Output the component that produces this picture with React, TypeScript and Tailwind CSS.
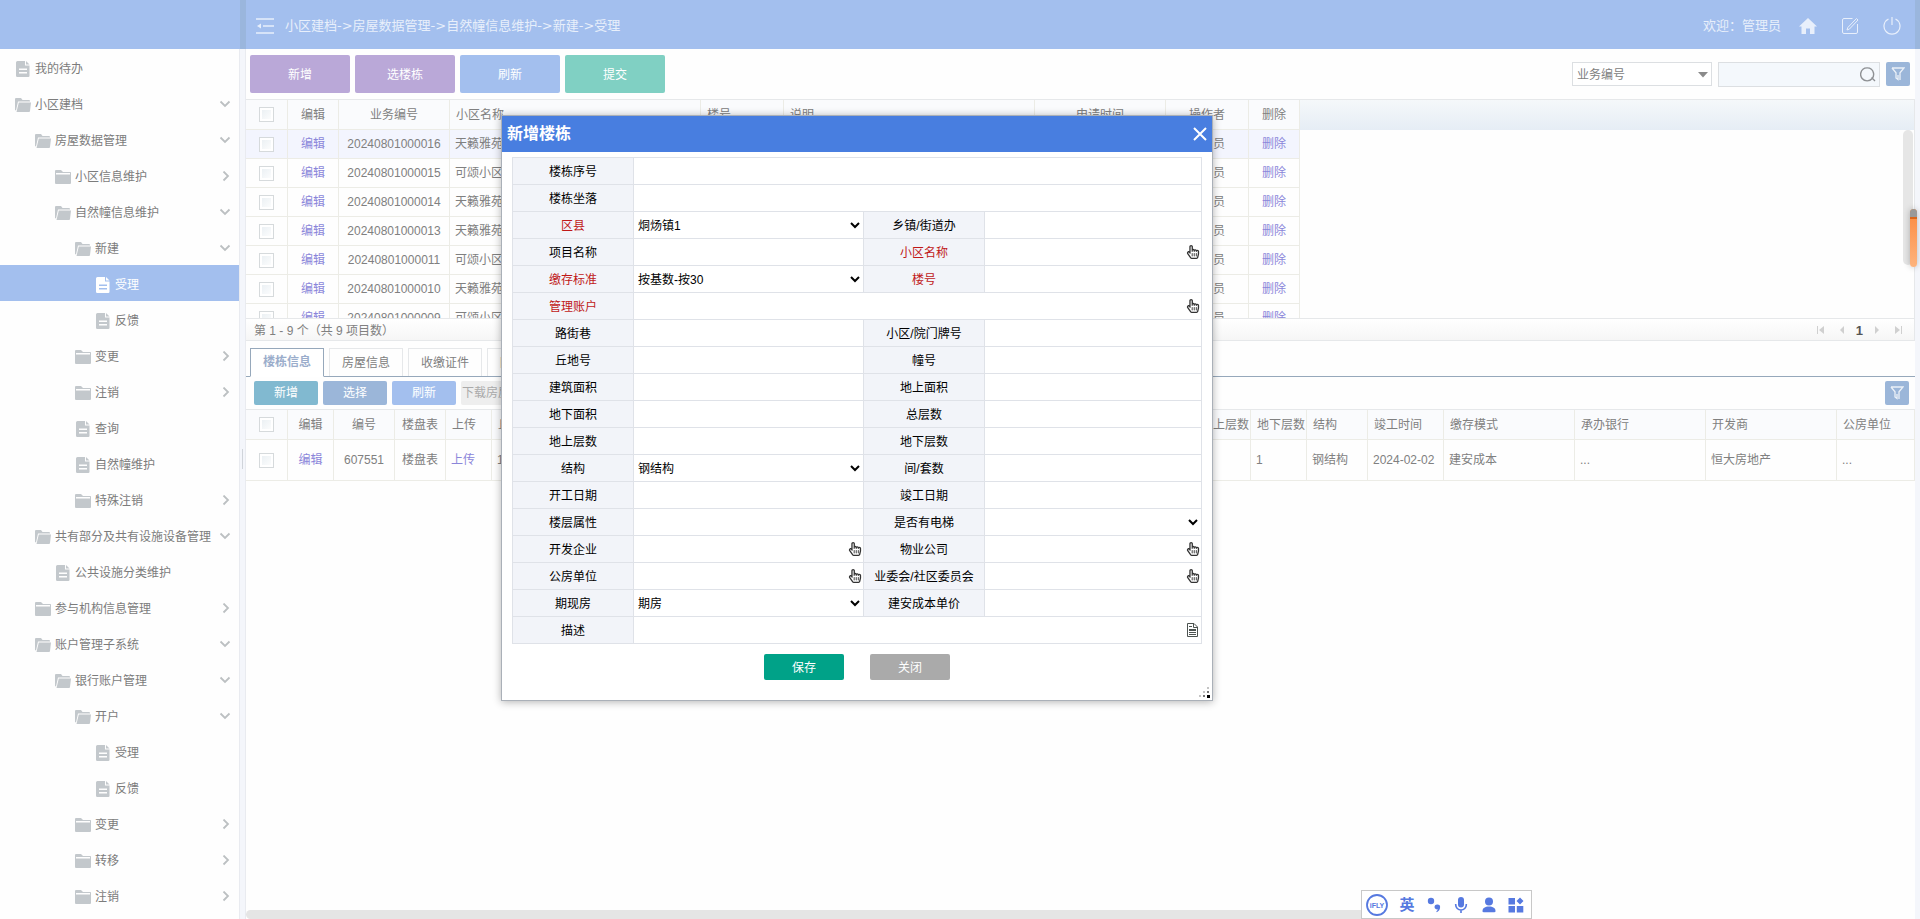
import { Fragment, useState } from 'react';
import type { ReactNode } from 'react';
import clsx from 'clsx';
import { FaRegHandPointer } from 'react-icons/fa';

type IconKind = 'doc' | 'folder' | 'open';

interface MenuItem {
  label: string;
  level: number;
  icon: IconKind;
  active?: boolean;
}

interface FormField {
  name: string;
  label: string;
  required?: boolean;
  kind?: 'text' | 'select' | 'pick' | 'note';
  value?: string;
}

interface Column {
  title: string;
  width?: string;
  center?: boolean;
}

const menu: MenuItem[] = [
  { label: '我的待办', level: 0, icon: 'doc' },
  { label: '小区建档', level: 0, icon: 'open' },
  { label: '房屋数据管理', level: 1, icon: 'open' },
  { label: '小区信息维护', level: 2, icon: 'folder' },
  { label: '自然幢信息维护', level: 2, icon: 'open' },
  { label: '新建', level: 3, icon: 'open' },
  { label: '受理', level: 4, icon: 'doc', active: true },
  { label: '反馈', level: 4, icon: 'doc' },
  { label: '变更', level: 3, icon: 'folder' },
  { label: '注销', level: 3, icon: 'folder' },
  { label: '查询', level: 3, icon: 'doc' },
  { label: '自然幢维护', level: 3, icon: 'doc' },
  { label: '特殊注销', level: 3, icon: 'folder' },
  { label: '共有部分及共有设施设备管理', level: 1, icon: 'open' },
  { label: '公共设施分类维护', level: 2, icon: 'doc' },
  { label: '参与机构信息管理', level: 1, icon: 'folder' },
  { label: '账户管理子系统', level: 1, icon: 'open' },
  { label: '银行账户管理', level: 2, icon: 'open' },
  { label: '开户', level: 3, icon: 'open' },
  { label: '受理', level: 4, icon: 'doc' },
  { label: '反馈', level: 4, icon: 'doc' },
  { label: '变更', level: 3, icon: 'folder' },
  { label: '转移', level: 3, icon: 'folder' },
  { label: '注销', level: 3, icon: 'folder' },
];

const indents = ['pl-[15px]', 'pl-[35px]', 'pl-[55px]', 'pl-[75px]', 'pl-[95px]'];

const taskColumns: Column[] = [
  { title: '业务编号', width: 'w-[111px]', center: true },
  { title: '小区名称', width: 'w-[251px]' },
  { title: '楼号', width: 'w-[83px]' },
  { title: '说明', width: 'w-[251px]' },
  { title: '申请时间', width: 'w-[131px]', center: true },
  { title: '操作者', width: 'w-[83px]', center: true },
];

const tasks = [
  ['20240801000016', '天籁雅苑'],
  ['20240801000015', '可颂小区'],
  ['20240801000014', '天籁雅苑'],
  ['20240801000013', '天籁雅苑'],
  ['20240801000011', '可颂小区'],
  ['20240801000010', '天籁雅苑'],
  ['20240801000009', '可颂小区'],
];

const buildingColumns: Column[] = [
  { title: '编号', width: 'w-[61px]', center: true },
  { title: '楼盘表', width: 'w-[51px]', center: true },
  { title: '上传', width: 'w-[46px]' },
  { title: '丘地号', width: 'w-[90px]' },
  { title: '幢号', width: 'w-[70px]' },
  { title: '建筑面积', width: 'w-[100px]' },
  { title: '地上面积', width: 'w-[100px]' },
  { title: '地下面积', width: 'w-[100px]' },
  { title: '总层数', width: 'w-[70px]' },
  { title: '楼栋坐落', width: 'w-[173px]' },
  { title: '地上层数', width: 'w-[56px]' },
  { title: '地下层数', width: 'w-[56px]' },
  { title: '结构', width: 'w-[61px]' },
  { title: '竣工时间', width: 'w-[76px]' },
  { title: '缴存模式', width: 'w-[131px]' },
  { title: '承办银行', width: 'w-[131px]' },
  { title: '开发商', width: 'w-[131px]' },
  { title: '公房单位' },
];

const building = [
  '607551', '楼盘表', '上传', '1', '', '', '', '', '', '', '',
  '1', '钢结构', '2024-02-02', '建安成本', '...', '恒大房地产', '...',
];

// A row with a single field spans the whole form
const formRows: FormField[][] = [
  [{ name: 'seq', label: '楼栋序号' }],
  [{ name: 'address', label: '楼栋坐落' }],
  [
    { name: 'district', label: '区县', required: true, kind: 'select', value: '烔炀镇1' },
    { name: 'street', label: '乡镇/街道办' },
  ],
  [
    { name: 'project', label: '项目名称' },
    { name: 'community', label: '小区名称', required: true, kind: 'pick' },
  ],
  [
    { name: 'standard', label: '缴存标准', required: true, kind: 'select', value: '按基数-按30' },
    { name: 'buildingNo', label: '楼号', required: true },
  ],
  [{ name: 'account', label: '管理账户', required: true, kind: 'pick' }],
  [{ name: 'road', label: '路街巷' }, { name: 'gate', label: '小区/院门牌号' }],
  [{ name: 'plot', label: '丘地号' }, { name: 'block', label: '幢号' }],
  [{ name: 'area', label: '建筑面积' }, { name: 'areaAbove', label: '地上面积' }],
  [{ name: 'areaBelow', label: '地下面积' }, { name: 'floors', label: '总层数' }],
  [{ name: 'floorsAbove', label: '地上层数' }, { name: 'floorsBelow', label: '地下层数' }],
  [
    { name: 'structure', label: '结构', kind: 'select', value: '钢结构' },
    { name: 'units', label: '间/套数' },
  ],
  [{ name: 'startDate', label: '开工日期' }, { name: 'endDate', label: '竣工日期' }],
  [
    { name: 'floorAttr', label: '楼层属性' },
    { name: 'elevator', label: '是否有电梯', kind: 'select', value: '' },
  ],
  [
    { name: 'developer', label: '开发企业', kind: 'pick' },
    { name: 'property', label: '物业公司', kind: 'pick' },
  ],
  [
    { name: 'publicUnit', label: '公房单位', kind: 'pick' },
    { name: 'committee', label: '业委会/社区委员会', kind: 'pick' },
  ],
  [
    { name: 'stage', label: '期现房', kind: 'select', value: '期房' },
    { name: 'unitPrice', label: '建安成本单价' },
  ],
  [{ name: 'remark', label: '描述', kind: 'note' }],
];

function TreeIcon({ kind }: { kind: IconKind }) {
  if (kind === 'doc') {
    return (
      <svg viewBox="0 0 16 16" className="size-4 shrink-0" fill="currentColor" aria-hidden="true">
        <path
          fillRule="evenodd"
          d="M2.500 0H10v4.500h4.500v10.300a1.200 1.200 0 0 1-1.200 1.200H2.200A1.200 1.200 0 0 1 1 14.800V1.500A1.500 1.500 0 0 1 2.500 0ZM4 7.500V9h8V7.500H4Zm0 3.500v1.500h8V11H4Z"
        />
        <path d="M11 0l3.500 3.500H11z" />
      </svg>
    );
  }
  if (kind === 'folder') {
    return (
      <svg viewBox="0 0 16 16" className="size-4 shrink-0" fill="currentColor" aria-hidden="true">
        <path d="M0 4V2a1 1 0 0 1 1-1h5l2 2h7a1 1 0 0 1 1 1v0z" />
        <path d="M0 5.500h16V14a1 1 0 0 1-1 1H1a1 1 0 0 1-1-1z" />
        <path d="M0 3.500h1V6H0zM15 3.500h1V6h-1z" />
      </svg>
    );
  }
  return (
    <svg viewBox="0 0 16 16" className="size-4 shrink-0" fill="currentColor" aria-hidden="true">
      <path d="M0 13V2a1 1 0 0 1 1-1h5l1.500 2H14a1 1 0 0 1 1 1v.5H3L1 13.500z" />
      <path d="M3.800 5.500H16L15 14a1 1 0 0 1-1 1H1.500z" />
    </svg>
  );
}

function FilterIcon() {
  return (
    <svg viewBox="0 0 14 14" className="size-3.5" fill="none" stroke="currentColor" aria-hidden="true">
      <path d="M1 1h12L9 5.800V13M1 1l4 4.800V11l2 1.500V8" strokeWidth="1.300" />
    </svg>
  );
}

function FilterButton() {
  return (
    <button
      type="button"
      aria-label="筛选"
      className="flex size-6 items-center justify-center rounded-xs bg-[#9bb6d9] text-white/80"
    >
      <FilterIcon />
    </button>
  );
}

function CheckBox({ label }: { label: string }) {
  return (
    <input
      type="checkbox"
      aria-label={label}
      className="mx-auto block size-[15px] appearance-none border border-[#d6dadc] bg-linear-to-br from-[#e8eef2] to-white shadow-[inset_0_0_0_2px_#fff]"
    />
  );
}

function Sidebar() {
  return (
    <aside className="flex w-60 shrink-0 flex-col">
      <div className="h-[49px] shrink-0 bg-[#a3bfee]" />
      <nav className="flex-1 border-r border-[#e9ebf0]">
        {menu.map((item, i) => (
          <a
            key={i}
            href="#"
            className={clsx(
              'flex h-9 items-center gap-1 pt-1 pr-2',
              indents[item.level],
              item.active ? 'bg-[#a3bfee] text-white' : 'text-[#7c7c7c]',
            )}
          >
            <span className={item.active ? 'text-white' : 'text-[#c3c8cc]'}>
              <TreeIcon kind={item.icon} />
            </span>
            <span className="flex-1 whitespace-nowrap">{item.label}</span>
            {item.icon !== 'doc' && (
              <svg viewBox="0 0 12 12" className="size-3 shrink-0 text-[#bcc0c2]" fill="none" stroke="currentColor" strokeWidth="1.800" aria-hidden="true">
                <path d={item.icon === 'open' ? 'M1.500 2.500L6 7l4.500-4.500' : 'M4.500 .5L9 5 4.500 9.500'} />
              </svg>
            )}
          </a>
        ))}
      </nav>
    </aside>
  );
}

function Header() {
  return (
    <header className="flex h-[49px] shrink-0 items-center bg-[#a3bfee] pt-0.5 pr-3.5 pl-[10px] text-[13px] text-[#e8effb]">
      <button type="button" aria-label="收起菜单" className="mr-[11px]">
        <svg viewBox="0 0 18 16" className="h-4 w-[18px]" fill="none" stroke="currentColor" strokeWidth="1.500" aria-hidden="true">
          <path d="M0 1h18M7 8h11M0 15h18" />
          <path d="M1 8l4-2.500v5z" fill="currentColor" stroke="none" />
        </svg>
      </button>
      <span className="flex-1 font-['DejaVu_Sans','Noto_Sans_CJK_SC',sans-serif]">
        小区建档-&gt;房屋数据管理-&gt;自然幢信息维护-&gt;新建-&gt;受理
      </span>
      <span className="mr-[18px]">欢迎：管理员</span>
      <div className="flex items-center gap-6">
        <button type="button" aria-label="首页">
          <svg viewBox="0 0 18 16" className="h-4 w-[18px]" fill="currentColor" aria-hidden="true">
            <path d="M9 0l9 8.500h-2.500V16H11v-5.500H7V16H2.500V8.500H0z" />
          </svg>
        </button>
        <button type="button" aria-label="编辑">
          <svg viewBox="0 0 18 18" className="size-[18px]" fill="none" stroke="currentColor" aria-hidden="true">
            <path d="M11.500 1.500H3A1.500 1.500 0 0 0 1.500 3v12A1.500 1.500 0 0 0 3 16.500h12a1.500 1.500 0 0 0 1.500-1.500V7" />
            <path d="M15.500 1.500l1.500 1.500-8.500 9-2.500 1 .8-2.500z" />
          </svg>
        </button>
        <button type="button" aria-label="退出">
          <svg viewBox="0 0 18 18" className="size-[18px]" fill="none" stroke="currentColor" strokeWidth="1.200" aria-hidden="true">
            <path d="M5.500 2A8 8 0 1 0 12.500 2M9 0v8" />
          </svg>
        </button>
      </div>
    </header>
  );
}

const headCell = 'border-r border-b border-[#ecece6] bg-[#fafbfd] font-normal';
const bodyCell = 'border-r border-b border-[#ecece6]';

function TaskGrid() {
  return (
    <div className="relative h-[219px] shrink-0 overflow-hidden border-t border-r border-[#e6e8ea]">
      <table className="w-full table-fixed border-separate border-spacing-0 whitespace-nowrap">
        <thead>
          <tr className="h-[30px]">
            <th className={clsx(headCell, 'w-[42px]')}><CheckBox label="全选" /></th>
            <th className={clsx(headCell, 'w-[51px]')}>编辑</th>
            {taskColumns.map((col) => (
              <th key={col.title} className={clsx(headCell, col.width, col.center ? 'text-center' : 'pl-1.5 text-left')}>
                {col.title}
              </th>
            ))}
            <th className={clsx(headCell, 'w-[51px]')}>删除</th>
            <th className="bg-linear-to-b from-[#f5f8fa] to-[#e6edf5]" aria-label="空列" />
          </tr>
        </thead>
        <tbody>
          {tasks.map(([no, name], i) => (
            <tr key={no} className="h-[29px]">
              {[
                <CheckBox label={no} />,
                <a href="#" className="text-[#8b86da]">编辑</a>,
                no,
                name,
                '',
                '',
                '',
                '管理员',
                <a href="#" className="text-[#8b86da]">删除</a>,
              ].map((cell, j) => (
                <td
                  key={j}
                  className={clsx(
                    bodyCell,
                    i === 0 && 'bg-[#f3f5fe]',
                    j >= 3 && j <= 5 ? 'pl-[5px]' : 'text-center',
                  )}
                >
                  {cell}
                </td>
              ))}
              <td />
            </tr>
          ))}
        </tbody>
      </table>
      <div className="absolute top-[30px] right-px h-[135px] w-2.5 rounded-full bg-[#e6e6e6]" />
    </div>
  );
}

function PagerArrow({ label, path }: { label: string; path: string }) {
  return (
    <button type="button" aria-label={label} className="text-[#d0d0d0]">
      <svg viewBox="0 0 8 8" className="size-2" fill="currentColor" aria-hidden="true">
        <path d={path} />
      </svg>
    </button>
  );
}

function Pager() {
  return (
    <div className="flex h-[23px] shrink-0 items-center border-y border-r border-[#e6e8ea] bg-linear-to-b from-white to-[#f6f6f6] pt-0.5 pr-[11px] pl-2">
      <span className="flex-1">第 1 - 9 个（共 9 项目数）</span>
      <div className="flex items-center gap-3.5">
        <PagerArrow label="第一页" path="M1 0h1v8H1zM8 0v8L3 4z" />
        <div className="flex items-center gap-2.5">
          <PagerArrow label="上一页" path="M6 0v8L2 4z" />
          <b className="text-[13px] text-[#555]">1</b>
          <PagerArrow label="下一页" path="M2 0v8l4-4z" />
        </div>
        <PagerArrow label="最后一页" path="M0 0v8l5-4zM6 0h1v8H6z" />
      </div>
    </div>
  );
}

function BuildingPanel() {
  const tabs = ['楼栋信息', '房屋信息', '收缴证件', '附件资料'];
  const [current, setCurrent] = useState(tabs[0]);

  return (
    <section className="flex min-h-0 flex-1 flex-col">
      <div className="flex h-9 shrink-0 items-end gap-[5px] border-b border-[#96a8bb] pl-1" role="tablist">
        {tabs.map((tab) => (
          <button
            key={tab}
            type="button"
            role="tab"
            aria-selected={tab === current}
            onClick={() => setCurrent(tab)}
            className={clsx(
              'h-7 w-[74px] border',
              tab === current
                ? '-mb-px h-[29px] border-[#96a8bb] border-b-white bg-white pb-px font-bold text-[#9badcb]'
                : 'border-[#e6e8ea] border-b-0',
            )}
          >
            {tab}
          </button>
        ))}
      </div>
      <div className="flex h-8 shrink-0 items-center gap-[5px] pr-1.5 pl-2">
        <button type="button" className="h-6 w-16 rounded-xs bg-[#81b9d0] text-white">新增</button>
        <button type="button" className="h-6 w-16 rounded-xs bg-[#9bb6d9] text-white">选择</button>
        <button type="button" className="h-6 w-16 rounded-xs bg-[#a3bfee] text-white">刷新</button>
        <button type="button" disabled className="h-6 rounded-xs bg-[#eee] px-px text-[#aaa]">下载房屋模板</button>
        <div className="flex-1" />
        <FilterButton />
      </div>
      <div className="flex-1 border-t border-[#e6e8ea]">
        <table className="w-full table-fixed border-separate border-spacing-0 whitespace-nowrap">
          <thead>
            <tr className="h-[30px]">
              <th className={clsx(headCell, 'w-[42px]')}><CheckBox label="全选楼栋" /></th>
              <th className={clsx(headCell, 'w-[46px]')}>编辑</th>
              {buildingColumns.map((col) => (
                <th key={col.title} className={clsx(headCell, col.width, col.center ? 'text-center' : 'pl-1.5 text-left')}>
                  {col.title}
                </th>
              ))}
            </tr>
          </thead>
          <tbody>
            <tr className="h-[41px]">
              <td className={bodyCell}><CheckBox label="607551" /></td>
              <td className={clsx(bodyCell, 'text-center')}><a href="#" className="text-[#8b86da]">编辑</a></td>
              {building.map((value, i) => (
                <td key={i} className={clsx(bodyCell, i < 2 ? 'text-center' : 'pl-[5px]')}>
                  {i === 2 ? <a href="#" className="text-[#8b86da]">{value}</a> : value}
                </td>
              ))}
            </tr>
          </tbody>
        </table>
      </div>
      <div className="h-[9px] w-[70%] shrink-0 rounded-l-full bg-[#e5e5e5]" />
    </section>
  );
}

function FieldInput({ field }: { field: FormField }) {
  if (field.kind === 'select') {
    return (
      <select id={field.name} defaultValue={field.value} className="block h-[26px] w-full bg-white pt-px text-black">
        <option>{field.value}</option>
      </select>
    );
  }
  let action: ReactNode = null;
  if (field.kind === 'pick') {
    action = (
      <button type="button" aria-label={`选择${field.label}`} className="pr-px text-[#333]">
        <FaRegHandPointer className="size-3.5" />
      </button>
    );
  } else if (field.kind === 'note') {
    action = (
      <button type="button" aria-label="编辑描述" className="pr-[3px] text-[#4c5350]">
        <svg viewBox="0 0 11 14" className="h-3.5 w-[11px]" fill="none" stroke="currentColor" aria-hidden="true">
          <path d="M.5.5H7L10.500 4v9.500H.5zM6.500.5v4h4M2 3.500h3M2 6.500h7M2 7.500h7M2 9.500h7M2 11.500h7" />
        </svg>
      </button>
    );
  }
  return (
    <div className="flex h-[26px] items-center">
      <input id={field.name} type="text" className="h-full min-w-0 flex-1 px-1 text-black outline-none" />
      {action}
    </div>
  );
}

function BuildingDialog() {
  return (
    <div
      role="dialog"
      aria-labelledby="dialog-title"
      className="absolute top-[115px] left-[501px] w-[712px] border border-[#aab0b8] bg-white text-black shadow-[0_1px_8px_rgba(0,0,0,0.3)]"
    >
      <div className="flex h-9 items-center justify-between bg-[#487ee0] pr-[5px] pl-[5px] text-white">
        <h2 id="dialog-title" className="text-base font-bold">新增楼栋</h2>
        <button type="button" aria-label="关闭窗口">
          <svg viewBox="0 0 14 14" className="size-3.5" fill="none" stroke="currentColor" strokeWidth="2" aria-hidden="true">
            <path d="M1 1l12 12M13 1L1 13" />
          </svg>
        </button>
      </div>
      <form className="px-2.5 pt-[5px] pb-5">
        <table className="w-full table-fixed border-separate border-spacing-0 border-t border-l border-[#dfe2e8]">
          <colgroup>
            <col className="w-[121px]" />
            <col />
            <col className="w-[121px]" />
            <col className="w-[217px]" />
          </colgroup>
          <tbody>
            {formRows.map((row) => (
              <tr key={row[0].name} className="h-[27px]">
                {row.map((field) => (
                  <Fragment key={field.name}>
                    <th
                      className={clsx(
                        'border-r border-b border-[#dfe2e8] bg-[#f2f4f9] p-0 pt-0.5 font-normal whitespace-nowrap',
                        field.required && 'text-[#c01818]',
                      )}
                    >
                      <label htmlFor={field.name}>{field.label}</label>
                    </th>
                    <td colSpan={row.length === 1 ? 3 : 1} className="border-r border-b border-[#dfe2e8] p-0">
                      <FieldInput field={field} />
                    </td>
                  </Fragment>
                ))}
              </tr>
            ))}
          </tbody>
        </table>
        <div className="mt-2.5 flex justify-center gap-[26px]">
          <button type="submit" className="h-[26px] w-20 rounded-xs bg-[#00a288] pt-px text-white">保存</button>
          <button type="button" className="h-[26px] w-20 rounded-xs bg-[#aaa] pt-px text-white">关闭</button>
        </div>
      </form>
      <svg viewBox="0 0 12 12" className="absolute right-px bottom-px size-3" aria-hidden="true">
        <path d="M8 0h2v2H8zM4 4h2v2H4zM0 8h2v2H0z" fill="#c4c4c4" />
        <path d="M8 4h2v2H8zM4 8h2v2H4z" fill="#777" />
        <path d="M8 8h3v3H8z" fill="#000" />
      </svg>
    </div>
  );
}

function ImeBar() {
  return (
    <div className="absolute bottom-0 left-[1361px] flex h-[29px] w-[171px] items-center justify-between border border-[#c8c8c8] bg-white pr-[7px] pl-1 text-[#5679e0]">
      <svg viewBox="0 0 22 22" className="size-[22px]" aria-hidden="true">
        <circle cx="11" cy="11" r="10" fill="none" stroke="currentColor" strokeWidth="1.800" />
        <text x="11" y="13.500" textAnchor="middle" fontSize="7" fontWeight="bold" fill="currentColor">iFLY</text>
      </svg>
      <span className="text-[15px] font-bold">英</span>
      <svg viewBox="0 0 16 16" className="size-4" fill="currentColor" aria-hidden="true">
        <circle cx="5" cy="4" r="3.200" />
        <path d="M11.500 7.500a2.600 2.600 0 0 1 2.600 2.800c0 2.200-1.200 4-3.300 5l-.5-1c1-.6 1.500-1.200 1.600-2a2.500 2.500 0 1 1-.4-4.800z" />
      </svg>
      <svg viewBox="0 0 16 16" className="size-4" fill="currentColor" aria-hidden="true">
        <rect x="5" y="0" width="6" height="10.500" rx="3" />
        <path d="M2.700 7v.7a5.300 5.300 0 0 0 10.600 0V7M8 13v3" fill="none" stroke="currentColor" strokeWidth="1.600" />
      </svg>
      <svg viewBox="0 0 16 16" className="size-4" fill="currentColor" aria-hidden="true">
        <circle cx="8" cy="4.500" r="4" />
        <path d="M1.500 14c0-3 2.500-4.500 6.500-4.500s6.500 1.500 6.500 4.500c0 .8-.4 1.200-1 1.200h-11c-.6 0-1-.4-1-1.200z" />
      </svg>
      <svg viewBox="0 0 16 16" className="size-4" fill="currentColor" aria-hidden="true">
        <path d="M.5 1h6.500v6.500H.5zM.5 9h6.500v6.500H.5zM8.800 9h6.500v6.500H8.800zM12 .5l3.500 3.500L12 7.500 8.500 4z" />
      </svg>
    </div>
  );
}

export default function App() {
  return (
    <div className="relative flex h-screen overflow-hidden bg-[#fefefe] font-['Liberation_Sans','Noto_Sans_CJK_SC',sans-serif] text-xs text-[#808080]">
      <Sidebar />
      {/* Splitter between menu and content */}
      <div className="flex w-1.5 shrink-0 flex-col items-center border-r border-[#e9ebf0] bg-[#f4f6fb]">
        <div className="h-[49px] w-1.5 bg-[#9ab6dd]" />
        <div className="flex flex-1 items-center pb-[50px]">
          <div className="h-5 w-px bg-[#d0d4da]" />
        </div>
      </div>

      <main className="flex min-w-0 flex-1 flex-col">
        <Header />
        <div className="flex h-[50px] shrink-0 items-center gap-[5px] pr-[5px] pl-1">
          <button type="button" className="h-[38px] w-[100px] rounded-xs bg-[#baa8d8] pt-px text-white">新增</button>
          <button type="button" className="h-[38px] w-[100px] rounded-xs bg-[#baa8d8] pt-px text-white">选楼栋</button>
          <button type="button" className="h-[38px] w-[100px] rounded-xs bg-[#a3bfee] pt-px text-white">刷新</button>
          <button type="button" className="h-[38px] w-[100px] rounded-xs bg-[#80d0c3] pt-px text-white">提交</button>
          <div className="flex-1" />
          <div className="flex items-center gap-1.5">
            <div className="relative">
              <select aria-label="查询字段" className="block h-6 w-[140px] appearance-none border border-[#dcdfe2] bg-white pt-px pl-1">
                <option>业务编号</option>
              </select>
              <svg viewBox="0 0 10 6" className="pointer-events-none absolute top-2.5 right-1 h-1.5 w-2.5" fill="#8a8a8a" aria-hidden="true">
                <path d="M0 0h10L5 5.500z" />
              </svg>
            </div>
            <div className="relative">
              <input type="text" aria-label="查询内容" className="block h-[25px] w-[162px] border border-[#dcdfe2] bg-[#f4f8fc] pr-6 pl-1" />
              <button type="button" aria-label="查询" className="absolute top-1 right-1">
                <svg viewBox="0 0 16 16" className="size-4" fill="none" stroke="#8e9194" strokeWidth="1.400" aria-hidden="true">
                  <path d="M13.500 7A6.500 6.500 0 1 1 .8 7a6.500 6.500 0 0 1 12.700 0zM11.500 11.500l3.500 3.500" />
                </svg>
              </button>
            </div>
            <FilterButton />
          </div>
        </div>
        <TaskGrid />
        <Pager />
        <BuildingPanel />
      </main>

      <div className="w-[5px] shrink-0 bg-[#f4f6fb]">
        <div className="h-[49px] bg-[#9ab6dd]" />
      </div>

      {/* Floating side handle */}
      <div className="absolute top-[209px] right-[3px] h-[58px] w-[7px] rounded-full bg-linear-to-b from-[#fb8a3c] to-[#fdb37c] shadow-[0_0_6px_rgba(0,0,0,0.25)]">
        <div className="h-2.5 rounded-t-full border-b-2 border-[#d9661c] bg-[#999]" />
      </div>

      <BuildingDialog />
      <ImeBar />
    </div>
  );
}
